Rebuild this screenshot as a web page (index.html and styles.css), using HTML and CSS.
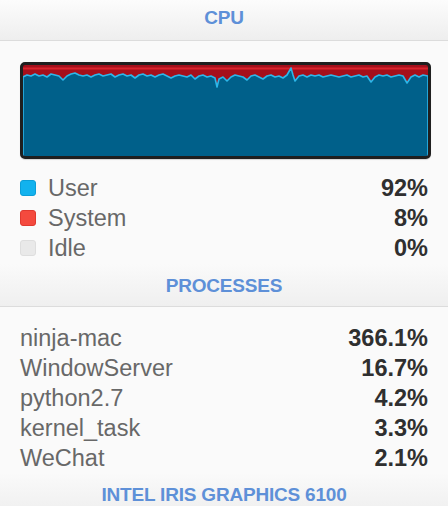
FILE: index.html
```
<!DOCTYPE html>
<html>
<head>
<meta charset="utf-8">
<link rel="stylesheet" href="styles.css">
</head>
<body>
<div class="panel">
  <div class="band band-top"><span class="band-title">CPU</span></div>
  <div class="chart">
    <svg class="chart-svg" viewBox="0 0 405 91" preserveAspectRatio="none">
      <rect x="0" y="0" width="405" height="91" fill="#a50f1b"/>
      <rect x="0" y="2.5" width="405" height="2" fill="#d9232c"/>
      <path fill="#00608a" stroke="#2cb7ea" stroke-width="1.6" stroke-linejoin="round" d="M0 12 L4 10 L8 11 L12 9 L16 11 L20 10 L24 12 L28 9 L32 10 L36 11 L40 15 L44 11 L48 9 L52 8 L56 10 L60 11 L64 10 L68 12 L72 10 L76 9 L80 11 L84 10 L88 9 L92 12 L96 10 L100 9 L104 11 L108 10 L112 13 L116 10 L120 9 L124 11 L128 10 L132 12 L136 10 L140 9 L144 11 L148 13 L152 11 L156 10 L160 11 L164 12 L168 10 L172 14 L176 11 L180 10 L184 12 L188 11 L192 13 L194 22 L196 14 L200 12 L204 16 L208 12 L212 10 L216 11 L220 12 L224 15 L228 11 L232 10 L236 12 L240 14 L244 11 L248 10 L252 12 L256 11 L260 13 L264 10 L268 3 L270 10 L272 16 L276 11 L280 10 L284 12 L288 10 L292 11 L296 10 L300 12 L304 11 L308 10 L312 11 L316 12 L320 11 L324 10 L328 12 L332 11 L336 10 L340 12 L344 11 L348 17 L352 12 L356 10 L360 11 L364 10 L368 12 L372 11 L376 10 L380 11 L384 18 L388 12 L392 10 L396 12 L400 10 L405 11 L405 92 L0 92 Z"/>
    </svg>
  </div>
  <div class="legend">
    <div class="row"><span class="swatch swatch-user"></span><span class="label">User</span><span class="value">92%</span></div>
    <div class="row"><span class="swatch swatch-system"></span><span class="label">System</span><span class="value">8%</span></div>
    <div class="row"><span class="swatch swatch-idle"></span><span class="label">Idle</span><span class="value">0%</span></div>
  </div>
  <div class="band band-mid"><span class="band-title">PROCESSES</span></div>
  <div class="processes">
    <div class="row"><span class="label name">ninja-mac</span><span class="value">366.1%</span></div>
    <div class="row"><span class="label name">WindowServer</span><span class="value">16.7%</span></div>
    <div class="row"><span class="label name">python2.7</span><span class="value">4.2%</span></div>
    <div class="row"><span class="label name">kernel_task</span><span class="value">3.3%</span></div>
    <div class="row"><span class="label name">WeChat</span><span class="value">2.1%</span></div>
  </div>
  <div class="band band-bottom"><span class="band-title">INTEL IRIS GRAPHICS 6100</span></div>
</div>
</body>
</html>
```
FILE: styles.css
```
html, body {
  margin: 0;
  padding: 0;
  background: #fafafa;
}
.panel {
  width: 448px;
  height: 506px;
  overflow: hidden;
  font-family: "Liberation Sans", Arial, sans-serif;
  background: #fafafa;
}
.band {
  display: flex;
  justify-content: center;
  align-items: center;
  box-sizing: border-box;
}
.band-title {
  font-weight: bold;
  font-size: 19px;
  color: #5e90d8;
  letter-spacing: -0.2px;
}
.band-top {
  height: 41px;
  padding-bottom: 5px;
  background: linear-gradient(#fcfcfc, #eeeeee);
  border-bottom: 1px solid #dcdcdc;
}
.band-mid {
  height: 43px;
  margin-top: 1px;
  padding-top: 1px;
  background: linear-gradient(#fafafa, #efefef);
  border-bottom: 1px solid #dcdcdc;
}
.band-bottom {
  height: 40px;
  padding-top: 4px;
  background: linear-gradient(#fafafa, #efefef);
}
.chart {
  margin: 21px 17px 0 20px;
  height: 97px;
  box-sizing: border-box;
  border: 3px solid #1f1f1f;
  border-radius: 5px;
  overflow: hidden;
  background: #1f1f1f;
  box-shadow: 0 1px 1px rgba(0,0,0,0.15);
}
.chart-svg {
  display: block;
  width: 100%;
  height: 100%;
}
.legend {
  padding: 14px 20px 0 20px;
}
.processes {
  padding: 16px 20px 0 20px;
}
.row {
  display: flex;
  align-items: center;
  height: 30px;
  font-size: 23.5px;
}
.label {
  color: #686868;
  flex: 1;
}
.value {
  color: #2f2f2f;
  font-weight: bold;
  margin-right: 0;
}
.swatch {
  width: 16px;
  height: 16px;
  border-radius: 3px;
  margin-right: 12px;
  box-sizing: border-box;
}
.swatch-user {
  background: #12b2ee;
  border: 1px solid #0a9ed8;
}
.swatch-system {
  background: #f44a3e;
  border: 1px solid #e0392f;
}
.swatch-idle {
  background: #e9e9e9;
  border: 1px solid #dedede;
}
```
